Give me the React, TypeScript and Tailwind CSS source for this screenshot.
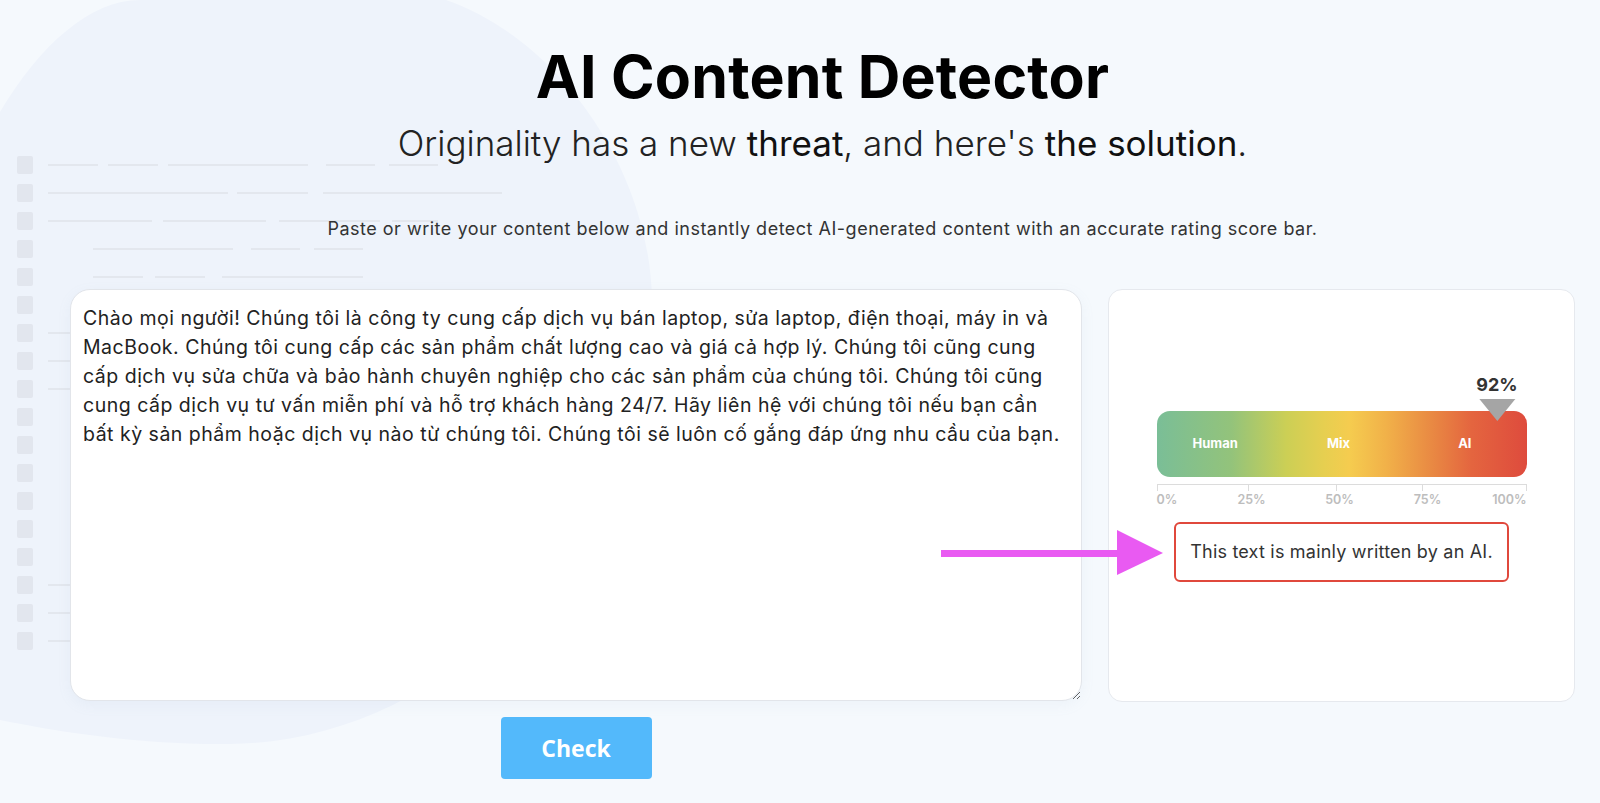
import React from "react"

const CONTENT = [
  "Chào mọi người! Chúng tôi là công ty cung cấp dịch vụ bán laptop, sửa laptop, điện thoại, máy in và",
  "MacBook. Chúng tôi cung cấp các sản phẩm chất lượng cao và giá cả hợp lý. Chúng tôi cũng cung",
  "cấp dịch vụ sửa chữa và bảo hành chuyên nghiệp cho các sản phẩm của chúng tôi. Chúng tôi cũng",
  "cung cấp dịch vụ tư vấn miễn phí và hỗ trợ khách hàng 24/7. Hãy liên hệ với chúng tôi nếu bạn cần",
  "bất kỳ sản phẩm hoặc dịch vụ nào từ chúng tôi. Chúng tôi sẽ luôn cố gắng đáp ứng nhu cầu của bạn.",
].join("\n")

// faint document skeleton behind the header
const skeletonRows: { y: number; segs: number[][] }[] = [
  { y: 165, segs: [[48, 98], [108, 158], [168, 308], [326, 375], [389, 438]] },
  { y: 193, segs: [[48, 228], [237, 308], [323, 502]] },
  { y: 221, segs: [[48, 152], [163, 266], [279, 380], [392, 438]] },
  { y: 249, segs: [[93, 233], [251, 300], [314, 363]] },
  { y: 277, segs: [[93, 143], [155, 205], [222, 363]] },
  { y: 333, segs: [[48, 140]] },
  { y: 361, segs: [[48, 140]] },
  { y: 389, segs: [[48, 140]] },
  { y: 585, segs: [[48, 140]] },
  { y: 613, segs: [[48, 140]] },
  { y: 641, segs: [[48, 140]] },
]

function Backdrop() {
  return (
    <svg
      className="pointer-events-none absolute inset-0"
      width="1600"
      height="803"
      viewBox="0 0 1600 803"
    >
      <path
        d="M0 112 C40 45 90 0 140 0 L446 0 C560 40 650 170 652 300 C654 520 460 742 230 744 C140 745 60 732 0 720 Z"
        fill="#eef3fb"
      />
      {Array.from({ length: 18 }).map((_, i) => (
        <rect key={i} x="17" y={156 + i * 28} width="16" height="18" rx="2" fill="#e2e6ee" />
      ))}
      {skeletonRows.map((row) =>
        row.segs.map(([a, b], j) => (
          <rect key={`${row.y}-${j}`} x={a} y={row.y - 1} width={b - a} height="2" fill="#e3e7ee" />
        ))
      )}
    </svg>
  )
}

function ScoreBar() {
  return (
    <div className="relative mx-auto mt-[121px] w-[370px]">
      <div className="grid h-[66px] grid-cols-3 items-center rounded-[13px] bg-[linear-gradient(90deg,#7abe97_0%,#93c37b_20%,#cccf55_35%,#e6cf50_45%,#f5cc4f_52%,#f1b149_62%,#e98a43_74%,#e4653f_85%,#de4b3d_100%)] text-center text-[13px] font-bold text-white">
        <span className="pr-[6px]">Human</span>
        <span className="pr-[6px]">Mix</span>
        <span>AI</span>
      </div>
      <div className="absolute left-[92%] top-[-35px] flex -translate-x-1/2 flex-col items-center">
        <span className="text-[18px] font-bold leading-none text-[#333]">92%</span>
        <span className="mt-[5px] h-0 w-0 border-l-[18px] border-r-[18px] border-t-[22px] border-l-transparent border-r-transparent border-t-[#a5a5a5]" />
      </div>
      <div className="mt-[7px] grid h-[7px] grid-cols-[91px_88px_86px_104px_1px] border-t border-[#dcdcdc]">
        <span className="w-px bg-[#dcdcdc]" />
        <span className="w-px bg-[#dcdcdc]" />
        <span className="w-px bg-[#dcdcdc]" />
        <span className="w-px bg-[#dcdcdc]" />
        <span className="w-px bg-[#dcdcdc]" />
      </div>
      <div className="mt-[3px] grid grid-cols-[50px_90px_86px_90px_54px] text-[12.5px] font-semibold leading-none text-[#bdbdbd]">
        <span>0%</span>
        <span className="text-center">25%</span>
        <span className="text-center">50%</span>
        <span className="text-center">75%</span>
        <span className="text-right">100%</span>
      </div>
    </div>
  )
}

export default function App() {
  return (
    <div className="relative min-h-screen w-full overflow-hidden bg-[#f5f9fd] font-['Inter',sans-serif]">
      <Backdrop />
      <div className="relative pl-[70px] pr-[25px]">
        <div className="pt-[47px] text-center">
          <h1 className="text-[59px] font-bold leading-none tracking-[0.2px] text-black">
            AI Content Detector
          </h1>
          <p className="mt-[20px] text-[35px] font-light leading-none text-[#222]">
            Originality has a new <span className="font-normal text-[#111]">threat</span>, and here's{" "}
            <span className="font-normal text-[#111]">the solution</span>.
          </p>
          <p className="mt-[59px] text-[18px] leading-none tracking-[0.5px] text-[#333]">
            Paste or write your content below and instantly detect AI-generated content with an accurate rating score bar.
          </p>
        </div>

        <div className="relative mt-[51px] grid grid-cols-[1012px_467px] gap-[26px]">
          <div className="flex flex-col">
            <textarea
              wrap="off"
              defaultValue={CONTENT}
              className="h-[412px] w-full overflow-hidden rounded-[20px] border border-[#e2e5ea] bg-white pl-[12px] pr-[4px] pt-[14px] text-[19.5px] leading-[29px] tracking-[0.5px] text-[#222] shadow-[0_4px_14px_rgba(140,160,190,0.08)] outline-none"
            />
            <button className="mx-auto mt-[16px] h-[62px] w-[151px] rounded-[4px] bg-[#53b9fb] font-['Open_Sans',sans-serif] text-[23px] font-bold text-white">
              Check
            </button>
          </div>

          <div className="h-[413px] rounded-[14px] border border-[#e6e9ee] bg-white">
            <ScoreBar />
            <div className="mx-auto mt-[15px] flex h-[60px] w-[335px] items-center justify-center rounded-[6px] border-2 border-[#e0483c] text-[18px] tracking-[0.2px] text-[#333]">
              This text is mainly written by an AI.
            </div>
          </div>

          {/* annotation arrow */}
          <svg
            className="pointer-events-none absolute left-[871px] top-[241px]"
            width="224"
            height="46"
            viewBox="0 0 224 46"
          >
            <rect x="0" y="20" width="178" height="7" fill="#e95af2" />
            <path d="M176 0 L222 23 L176 45 Z" fill="#e95af2" />
          </svg>
        </div>
      </div>
    </div>
  )
}
